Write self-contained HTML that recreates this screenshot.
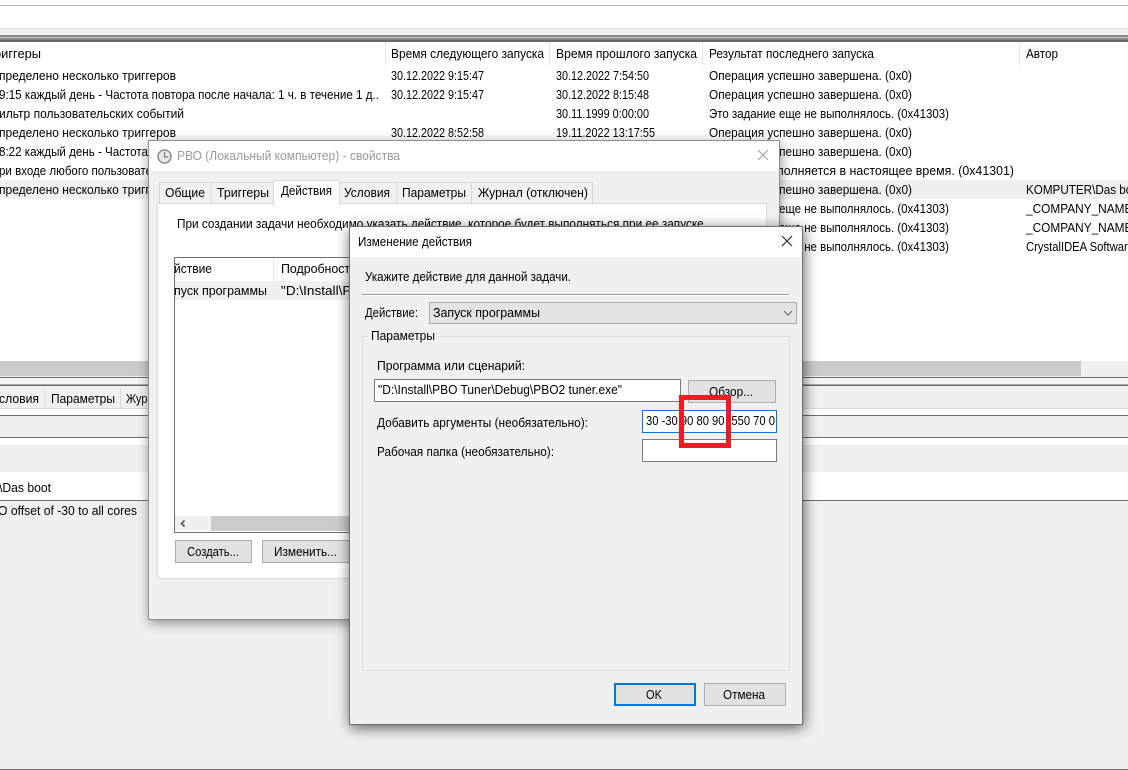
<!DOCTYPE html>
<html><head><meta charset="utf-8"><style>
html,body{margin:0;padding:0;background:#fff;overflow:hidden}
svg{display:block}
text{font-family:"Liberation Sans",sans-serif;font-size:12.500px;fill:#000;white-space:pre}
</style></head><body>
<svg width="1128" height="770" viewBox="0 0 1128 770" xmlns="http://www.w3.org/2000/svg">
<defs>
<filter id="sh" x="-10%" y="-10%" width="120%" height="120%"><feDropShadow dx="1" dy="3" stdDeviation="7" flood-color="#000" flood-opacity=".62"/></filter>
<filter id="sh1" x="-10%" y="-10%" width="120%" height="120%"><feDropShadow dx="1" dy="3" stdDeviation="6" flood-color="#000" flood-opacity=".42"/></filter>
</defs>
<rect width="1128" height="770" fill="#fff"/>
<!-- top -->
<rect y="5" width="1128" height="1" fill="#b9b9c4"/>
<rect y="28" width="1128" height="1" fill="#e2e2e2"/>
<rect y="29" width="1128" height="6" fill="#f0f0f0"/>
<rect y="35" width="1128" height="2" fill="#8a8a8a"/>
<rect y="37" width="1128" height="1" fill="#c8c8c8"/>
<rect y="38" width="1128" height="2" fill="#8a8a8a"/>
<rect y="40" width="1128" height="2" fill="#6a6a6a"/>
<!-- table header -->
<rect x="385" y="42" width="1" height="24" fill="#e5e5e5"/>
<rect x="549" y="42" width="1" height="24" fill="#e5e5e5"/>
<rect x="702" y="42" width="1" height="24" fill="#e5e5e5"/>
<rect x="1019" y="42" width="1" height="24" fill="#e5e5e5"/>
<text x="-6" y="58" textLength="47" lengthAdjust="spacingAndGlyphs">риггеры</text>
<text x="391" y="58" textLength="153" lengthAdjust="spacingAndGlyphs">Время следующего запуска</text>
<text x="556" y="58" textLength="141" lengthAdjust="spacingAndGlyphs">Время прошлого запуска</text>
<text x="709" y="58" textLength="165" lengthAdjust="spacingAndGlyphs">Результат последнего запуска</text>
<text x="1026" y="58" textLength="32" lengthAdjust="spacingAndGlyphs">Автор</text>
<rect y="180" width="1128" height="19" fill="#f0f0f0"/>
<!-- rows -->
<text x="-1" y="80" textLength="177" lengthAdjust="spacingAndGlyphs">пределено несколько триггеров</text>
<text x="-1" y="99" textLength="380" lengthAdjust="spacingAndGlyphs">9:15 каждый день - Частота повтора после начала: 1 ч. в течение 1 д..</text>
<text x="-1" y="118" textLength="185" lengthAdjust="spacingAndGlyphs">ильтр пользовательских событий</text>
<text x="-1" y="137" textLength="177" lengthAdjust="spacingAndGlyphs">пределено несколько триггеров</text>
<text x="-1" y="156" textLength="149" lengthAdjust="spacingAndGlyphs">8:22 каждый день - Частота</text>
<text x="-1" y="175" textLength="153" lengthAdjust="spacingAndGlyphs">ри входе любого пользовате</text>
<text x="-1" y="194" textLength="177" lengthAdjust="spacingAndGlyphs">пределено несколько триггеров</text>
<text x="391" y="80" textLength="93" lengthAdjust="spacingAndGlyphs">30.12.2022 9:15:47</text>
<text x="391" y="99" textLength="93" lengthAdjust="spacingAndGlyphs">30.12.2022 9:15:47</text>
<text x="391" y="137" textLength="93" lengthAdjust="spacingAndGlyphs">30.12.2022 8:52:58</text>
<text x="556" y="80" textLength="93" lengthAdjust="spacingAndGlyphs">30.12.2022 7:54:50</text>
<text x="556" y="99" textLength="93" lengthAdjust="spacingAndGlyphs">30.12.2022 8:15:48</text>
<text x="556" y="118" textLength="93" lengthAdjust="spacingAndGlyphs">30.11.1999 0:00:00</text>
<text x="556" y="137" textLength="99" lengthAdjust="spacingAndGlyphs">19.11.2022 13:17:55</text>
<text x="709" y="80" textLength="203" lengthAdjust="spacingAndGlyphs">Операция успешно завершена. (0x0)</text>
<text x="709" y="99" textLength="203" lengthAdjust="spacingAndGlyphs">Операция успешно завершена. (0x0)</text>
<text x="709" y="118" textLength="240" lengthAdjust="spacingAndGlyphs">Это задание еще не выполнялось. (0x41303)</text>
<text x="709" y="137" textLength="203" lengthAdjust="spacingAndGlyphs">Операция успешно завершена. (0x0)</text>
<text x="709" y="156" textLength="203" lengthAdjust="spacingAndGlyphs">Операция успешно завершена. (0x0)</text>
<text x="709" y="175" textLength="305" lengthAdjust="spacingAndGlyphs">Задание выполняется в настоящее время. (0x41301)</text>
<text x="709" y="194" textLength="203" lengthAdjust="spacingAndGlyphs">Операция успешно завершена. (0x0)</text>
<text x="709" y="213" textLength="240" lengthAdjust="spacingAndGlyphs">Это задание еще не выполнялось. (0x41303)</text>
<text x="709" y="232" textLength="240" lengthAdjust="spacingAndGlyphs">Это задание еще не выполнялось. (0x41303)</text>
<text x="709" y="251" textLength="240" lengthAdjust="spacingAndGlyphs">Это задание еще не выполнялось. (0x41303)</text>
<text x="1026" y="194" textLength="116" lengthAdjust="spacingAndGlyphs">KOMPUTER\Das boot</text>
<text x="1026" y="213" textLength="113" lengthAdjust="spacingAndGlyphs">_COMPANY_NAME_</text>
<text x="1026" y="232" textLength="113" lengthAdjust="spacingAndGlyphs">_COMPANY_NAME_</text>
<text x="1026" y="251" textLength="108" lengthAdjust="spacingAndGlyphs">CrystalIDEA Software</text>
<!-- horizontal scrollbar -->
<rect y="361" width="1128" height="16" fill="#f0f0f0"/>
<rect y="361" width="1081" height="15" fill="#cbcbcb"/>
<!-- lower panel -->
<rect y="377" width="1128" height="1" fill="#696969"/>
<rect y="378" width="1128" height="7" fill="#f4f4f4"/>
<rect y="384" width="1128" height="1" fill="#a8a8a8"/>
<rect y="385" width="1128" height="1" fill="#696969"/>
<rect y="386" width="1128" height="22" fill="#f0f0f0"/>
<rect y="408" width="1128" height="1" fill="#d9d9d9"/>
<rect y="409" width="1128" height="6" fill="#fff"/>
<rect y="415" width="1128" height="1" fill="#6e6e6e"/>
<rect y="416" width="1128" height="21" fill="#f0f0f0"/>
<rect y="437" width="1128" height="1" fill="#6e6e6e"/>
<rect y="438" width="1128" height="7" fill="#fff"/>
<rect y="445" width="1128" height="27" fill="#f0f0f0"/>
<rect y="472" width="1128" height="28" fill="#fff"/>
<rect y="500" width="1128" height="1" fill="#6e6e6e"/>
<rect y="501" width="1128" height="268" fill="#f0f0f0"/>
<rect y="769" width="1128" height="1" fill="#6e6e6e"/>
<rect x="44" y="388" width="1" height="20" fill="#d9d9d9"/>
<rect x="120" y="388" width="1" height="20" fill="#d9d9d9"/>
<text x="-1" y="403" textLength="40" lengthAdjust="spacingAndGlyphs">словия</text>
<text x="51" y="403" textLength="64" lengthAdjust="spacingAndGlyphs">Параметры</text>
<text x="126" y="403" textLength="40" lengthAdjust="spacingAndGlyphs">Журнал</text>
<text x="-1" y="492" textLength="52" lengthAdjust="spacingAndGlyphs">\Das boot</text>
<text x="-2" y="515" textLength="139" lengthAdjust="spacingAndGlyphs">O offset of -30 to all cores</text>

<!-- dialog 1 -->
<rect x="148.500" y="140.500" width="631" height="479" fill="#f0f0f0" stroke="#8f8f8f" stroke-width="1" filter="url(#sh1)"/>
<rect x="149" y="141" width="630" height="30" fill="#fff"/>
<circle cx="164.500" cy="156.500" r="6.500" fill="#e8e8e8" stroke="#8a8a8a" stroke-width="1.500"/>
<path d="M164.500 152v5h4" fill="none" stroke="#7d7d7d" stroke-width="1.200"/>
<text x="177" y="160" textLength="223" lengthAdjust="spacingAndGlyphs" style="fill:#999">РВО (Локальный компьютер) - свойства</text>
<path d="M758 150l10 10M768 150l-10 10" stroke="#9a9a9a" stroke-width="1" fill="none"/>
<!-- tabs -->
<rect x="159.500" y="182.500" width="52" height="22" fill="#f0f0f0" stroke="#d9d9d9"/>
<rect x="211.500" y="182.500" width="62" height="22" fill="#f0f0f0" stroke="#d9d9d9"/>
<rect x="339.500" y="182.500" width="57" height="22" fill="#f0f0f0" stroke="#d9d9d9"/>
<rect x="396.500" y="182.500" width="75" height="22" fill="#f0f0f0" stroke="#d9d9d9"/>
<rect x="471.500" y="182.500" width="121" height="22" fill="#f0f0f0" stroke="#d9d9d9"/>
<rect x="157.500" y="203.500" width="609" height="375" fill="#fff" stroke="#d9d9d9"/>
<rect x="273.500" y="180.500" width="66" height="24" fill="#fff" stroke="#d9d9d9"/>
<rect x="274" y="203" width="65" height="2" fill="#fff"/>
<text x="165" y="197" textLength="40" lengthAdjust="spacingAndGlyphs">Общие</text>
<text x="217" y="197" textLength="52" lengthAdjust="spacingAndGlyphs">Триггеры</text>
<text x="281" y="195" textLength="51" lengthAdjust="spacingAndGlyphs">Действия</text>
<text x="344" y="197" textLength="46" lengthAdjust="spacingAndGlyphs">Условия</text>
<text x="402" y="197" textLength="64" lengthAdjust="spacingAndGlyphs">Параметры</text>
<text x="478" y="197" textLength="110" lengthAdjust="spacingAndGlyphs">Журнал (отключен)</text>
<text x="177" y="228" textLength="530" lengthAdjust="spacingAndGlyphs">При создании задачи необходимо указать действие, которое будет выполняться при ее запуске.</text>
<!-- list -->
<rect x="174.500" y="257.500" width="300" height="275" fill="#fff" stroke="#6e6e6e"/>
<rect x="273" y="258" width="1" height="23" fill="#e5e5e5"/>
<rect x="175" y="281" width="300" height="19" fill="#f0f0f0"/>
<text x="174" y="273" textLength="38" lengthAdjust="spacingAndGlyphs">йствие</text>
<text x="281" y="273" textLength="76" lengthAdjust="spacingAndGlyphs">Подробности</text>
<text x="174" y="295" textLength="93" lengthAdjust="spacingAndGlyphs">пуск программы</text>
<text x="281" y="295" textLength="90" lengthAdjust="spacingAndGlyphs">"D:\Install\PBO</text>
<rect x="175" y="516" width="300" height="15" fill="#f0f0f0"/>
<rect x="211" y="516" width="264" height="15" fill="#cbcbcb"/>
<path d="M184.500 520.500l-3 3 3 3" fill="none" stroke="#555" stroke-width="1.600"/>
<rect x="175.500" y="540.500" width="76" height="22" fill="#e1e1e1" stroke="#adadad"/>
<rect x="262.500" y="540.500" width="88" height="22" fill="#e1e1e1" stroke="#adadad"/>
<text x="187" y="556" textLength="52" lengthAdjust="spacingAndGlyphs">Создать...</text>
<text x="274" y="556" textLength="63" lengthAdjust="spacingAndGlyphs">Изменить...</text>

<!-- dialog 2 -->
<rect x="349.500" y="226.500" width="453" height="498" fill="#f0f0f0" stroke="#6f6f6f" stroke-width="1" filter="url(#sh)"/>
<rect x="350" y="227" width="452" height="30" fill="#fff"/>
<text x="358" y="246" textLength="114" lengthAdjust="spacingAndGlyphs">Изменение действия</text>
<path d="M782 236l10 10M792 236l-10 10" stroke="#222" stroke-width="1.100" fill="none"/>
<text x="365" y="281" textLength="206" lengthAdjust="spacingAndGlyphs">Укажите действие для данной задачи.</text>
<rect x="362" y="294" width="427" height="1" fill="#a0a0a0"/>
<rect x="362" y="295" width="427" height="1" fill="#fff"/>
<text x="365" y="317" textLength="53" lengthAdjust="spacingAndGlyphs">Действие:</text>
<rect x="429.500" y="302.500" width="367" height="21" fill="#e3e3e3" stroke="#adadad"/>
<text x="433" y="317" textLength="107" lengthAdjust="spacingAndGlyphs">Запуск программы</text>
<path d="M784 311l4 4 4-4" fill="none" stroke="#666" stroke-width="1.100"/>
<rect x="362.500" y="336.500" width="427" height="334" fill="none" stroke="#dcdcdc"/>
<rect x="368" y="330" width="70" height="12" fill="#f0f0f0"/>
<text x="371" y="340" textLength="64" lengthAdjust="spacingAndGlyphs">Параметры</text>
<text x="377" y="370" textLength="148" lengthAdjust="spacingAndGlyphs">Программа или сценарий:</text>
<rect x="374.500" y="379.500" width="306" height="22" fill="#fff" stroke="#7a7a7a"/>
<text x="378" y="394" textLength="244" lengthAdjust="spacingAndGlyphs">"D:\Install\PBO Tuner\Debug\PBO2 tuner.exe"</text>
<rect x="688.500" y="380.500" width="87" height="22" fill="#e1e1e1" stroke="#adadad"/>
<text x="709" y="396" textLength="44" lengthAdjust="spacingAndGlyphs">Обзор...</text>
<text x="377" y="427" textLength="211" lengthAdjust="spacingAndGlyphs">Добавить аргументы (необязательно):</text>
<rect x="642.500" y="410.500" width="134" height="22" fill="#fff" stroke="#0078d7"/>
<text x="646" y="425" textLength="129" lengthAdjust="spacingAndGlyphs">30 -30 90 80 90 -550 70 0</text>
<text x="377" y="456" textLength="177" lengthAdjust="spacingAndGlyphs">Рабочая папка (необязательно):</text>
<rect x="642.500" y="439.500" width="134" height="22" fill="#fff" stroke="#7a7a7a"/>
<rect x="681.500" y="397.500" width="47" height="48" fill="none" stroke="#ed1c24" stroke-width="5"/>
<rect x="615" y="684" width="80" height="21" fill="#e1e1e1" stroke="#0078d7" stroke-width="2"/>
<text x="646" y="699" textLength="16" lengthAdjust="spacingAndGlyphs">OK</text>
<rect x="704.500" y="683.500" width="81" height="22" fill="#e1e1e1" stroke="#adadad"/>
<text x="723" y="699" textLength="42" lengthAdjust="spacingAndGlyphs">Отмена</text>
</svg>
</body></html>
